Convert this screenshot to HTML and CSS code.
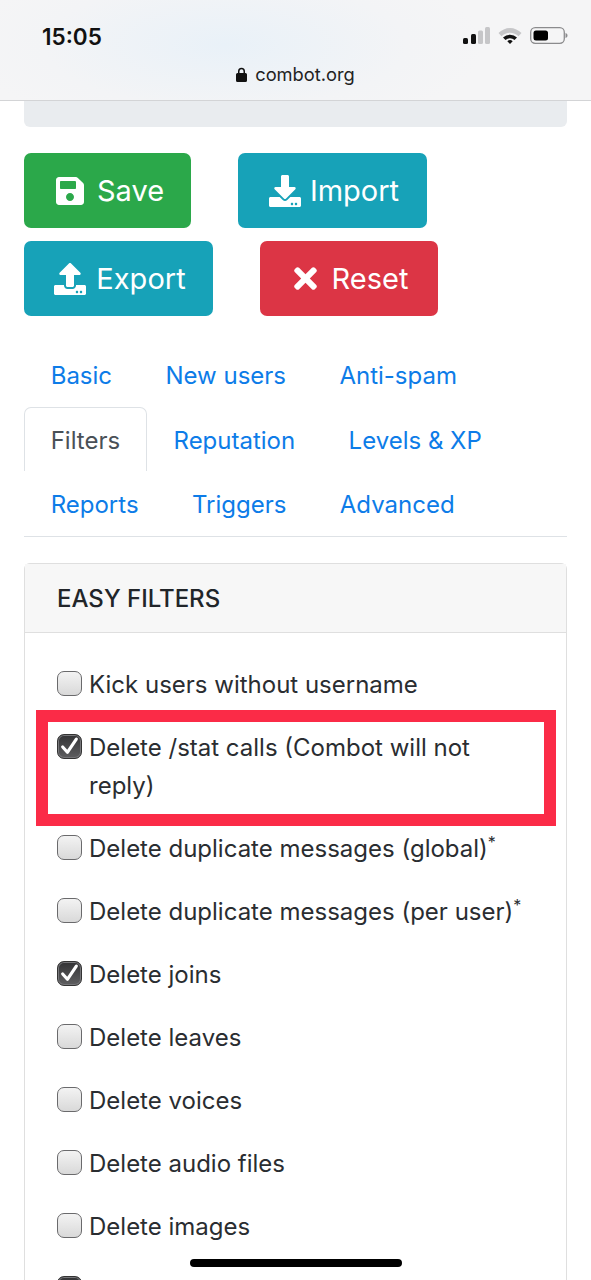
FILE: index.html
```html
<!DOCTYPE html>
<html lang="en">
<head>
<meta charset="utf-8">
<title>combot.org</title>
<link rel="stylesheet" href="styles.css">
</head>
<body>
<div class="screen">
  <header class="browser-bar">
    <div class="status">
      <span class="time">15:05</span>
      <span class="status-icons">
        <svg class="signal" width="27" height="17" viewBox="0 0 27 17"><rect x="0" y="11" width="5" height="6" rx="1.500" fill="#111"/><rect x="8" y="7" width="5" height="10" rx="1.500" fill="#111"/><rect x="15" y="3.500" width="5" height="13.500" rx="1.500" fill="#c6c6c8"/><rect x="22" y="0" width="5" height="17" rx="1.500" fill="#c6c6c8"/></svg>
        <svg class="wifi" width="24" height="17" viewBox="0 0 24 17"><path d="M0.500 6A16 16 0 0 1 23.500 6L20.500 9.200A12 12 0 0 0 3.500 9.200Z" fill="#c6c6c8"/><path d="M5 10.500A10 10 0 0 1 19 10.500L16.500 13A6.500 6.500 0 0 0 7.500 13Z" fill="#111"/><path d="M9.300 14.200A4 4 0 0 1 14.700 14.200L12 17Z" fill="#111"/></svg>
        <svg class="battery" width="38" height="17" viewBox="0 0 38 17"><rect x="0.700" y="0.700" width="33.600" height="15.600" rx="4.500" fill="none" stroke="#8b8b8d" stroke-width="1.300"/><rect x="3.500" y="3.500" width="14.500" height="10" rx="2.500" fill="#000"/><path d="M35.500 6c1.500.4 2 1.400 2 2.500s-.5 2.100-2 2.500z" fill="#8b8b8d"/></svg>
      </span>
    </div>
    <div class="url">
      <svg class="lock" width="11" height="15" viewBox="0 0 11 15"><path d="M2 6V4.300a3.500 3.500 0 0 1 7 0V6h.5A1.500 1.500 0 0 1 11 7.500v6A1.500 1.500 0 0 1 9.500 15h-8A1.500 1.500 0 0 1 0 13.500v-6A1.500 1.500 0 0 1 1.500 6zm1.500 0h4V4.300a2 2 0 0 0-4 0z" fill="#111"/></svg>
      <span>combot.org</span>
    </div>
  </header>

  <main class="page">
    <div class="notice"></div>

    <div class="actions">
      <a class="btn btn-green">
        <svg class="ico ico-save" viewBox="0 0 448 512"><path d="M433.941 129.941l-83.882-83.882A48 48 0 0 0 316.118 32H48C21.49 32 0 53.49 0 80v352c0 26.51 21.49 48 48 48h352c26.51 0 48-21.49 48-48V163.882a48 48 0 0 0-14.059-33.941zM224 416c-35.346 0-64-28.654-64-64 0-35.346 28.654-64 64-64s64 28.654 64 64c0 35.346-28.654 64-64 64zm96-304.52V212c0 6.627-5.373 12-12 12H76c-6.627 0-12-5.373-12-12V108c0-6.627 5.373-12 12-12h228.52c3.183 0 6.235 1.264 8.485 3.515l3.48 3.48A11.996 11.996 0 0 1 320 111.48z"/></svg>
        Save
      </a>
      <a class="btn btn-teal">
        <svg class="ico ico-box" viewBox="0 0 512 512"><path d="M216 0h80c13.3 0 24 10.700 24 24v168h87.700c17.800 0 26.700 21.500 14.100 34.100L269.700 378.300c-7.500 7.500-19.800 7.500-27.300 0L90.100 226.100c-12.600-12.600-3.700-34.100 14.100-34.100H192V24c0-13.300 10.700-24 24-24zm296 376v112c0 13.300-10.700 24-24 24H24c-13.300 0-24-10.700-24-24V376c0-13.300 10.700-24 24-24h146.700l49 49c20.100 20.100 52.500 20.100 72.600 0l49-49H488c13.300 0 24 10.700 24 24zm-124 88c0-11-9-20-20-20s-20 9-20 20 9 20 20 20 20-9 20-20zm64 0c0-11-9-20-20-20s-20 9-20 20 9 20 20 20 20-9 20-20z"/></svg>
        Import
      </a>
      <a class="btn btn-teal">
        <svg class="ico ico-box" viewBox="0 0 512 512"><path d="M296 384h-80c-13.300 0-24-10.700-24-24V192h-87.700c-17.800 0-26.700-21.500-14.100-34.100L242.300 5.700c7.500-7.500 19.800-7.500 27.300 0l152.200 152.200c12.600 12.600 3.700 34.100-14.100 34.100H320v168c0 13.300-10.700 24-24 24zm216-8v112c0 13.300-10.700 24-24 24H24c-13.300 0-24-10.700-24-24V376c0-13.300 10.700-24 24-24h136v8c0 30.900 25.100 56 56 56h80c30.900 0 56-25.100 56-56v-8h136c13.300 0 24 10.700 24 24zm-124 88c0-11-9-20-20-20s-20 9-20 20 9 20 20 20 20-9 20-20zm64 0c0-11-9-20-20-20s-20 9-20 20 9 20 20 20 20-9 20-20z"/></svg>
        Export
      </a>
      <a class="btn btn-red">
        <svg class="ico ico-times" viewBox="0 0 352 512"><path d="M242.720 256l100.070-100.070c12.280-12.280 12.280-32.190 0-44.480l-22.240-22.240c-12.280-12.280-32.190-12.280-44.480 0L176 189.280 75.930 89.210c-12.280-12.280-32.190-12.280-44.480 0L9.210 111.450c-12.280 12.280-12.280 32.190 0 44.480L109.280 256 9.210 356.070c-12.280 12.280-12.280 32.190 0 44.480l22.240 22.240c12.280 12.280 32.200 12.280 44.480 0L176 322.720l100.070 100.070c12.280 12.280 32.200 12.280 44.480 0l22.240-22.240c12.280-12.280 12.280-32.190 0-44.480L242.720 256z"/></svg>
        Reset
      </a>
    </div>

    <nav class="tabs">
      <a class="tab">Basic</a>
      <a class="tab">New users</a>
      <a class="tab">Anti-spam</a>
      <a class="tab tab-active">Filters</a>
      <a class="tab">Reputation</a>
      <a class="tab">Levels &amp; XP</a>
      <a class="tab">Reports</a>
      <a class="tab">Triggers</a>
      <a class="tab">Advanced</a>
    </nav>

    <section class="card">
      <h2 class="card-title">EASY FILTERS</h2>
      <div class="card-body">
        <label class="check"><span class="box"></span><span>Kick users without username</span></label>
        <label class="check"><span class="box box-on"><svg viewBox="0 0 20 20"><path d="M3.500 10.500l4.500 5 8.500-12.500" fill="none" stroke="#fff" stroke-width="3" stroke-linecap="round" stroke-linejoin="round"/></svg></span><span>Delete /stat calls (Combot will not reply)</span></label>
        <label class="check"><span class="box"></span><span>Delete duplicate messages (global)<sup>*</sup></span></label>
        <label class="check"><span class="box"></span><span>Delete duplicate messages (per user)<sup>*</sup></span></label>
        <label class="check"><span class="box box-on"><svg viewBox="0 0 20 20"><path d="M3.500 10.500l4.500 5 8.500-12.500" fill="none" stroke="#fff" stroke-width="3" stroke-linecap="round" stroke-linejoin="round"/></svg></span><span>Delete joins</span></label>
        <label class="check"><span class="box"></span><span>Delete leaves</span></label>
        <label class="check"><span class="box"></span><span>Delete voices</span></label>
        <label class="check"><span class="box"></span><span>Delete audio files</span></label>
        <label class="check"><span class="box"></span><span>Delete images</span></label>
        <label class="check"><span class="box box-on"></span><span>Delete sticker messages</span></label>
      </div>
    </section>
  </main>

  <div class="highlight"></div>
  <div class="home-indicator"></div>
</div>
</body>
</html>
```
FILE: styles.css
```css
* { box-sizing: border-box; }
html, body { margin: 0; padding: 0; background: #fff; }
.screen {
  position: relative;
  width: 591px;
  height: 1280px;
  overflow: hidden;
  font-family: Inter, "Liberation Sans", sans-serif;
  color: #212529;
}
.browser-bar {
  height: 101px;
  background: radial-gradient(ellipse 260px 90px at 225px 45px, #e9f1f8 0%, #f3f4f6 70%, #f5f5f6 100%);
  border-bottom: 1px solid #d3d4d6;
}
.status {
  display: flex;
  justify-content: space-between;
  align-items: center;
  height: 37px;
  padding: 18px 23px 0 42px;
  box-sizing: content-box;
}
.time { font-size: 22.500px; font-weight: 600; color: #111; }
.status-icons { display: flex; align-items: center; gap: 8px; margin-top: -2px; }
.url {
  display: flex;
  justify-content: center;
  align-items: center;
  gap: 8px;
  height: 30px;
  margin-top: 4px;
  font-size: 18.300px;
  color: #222;
}
.page { padding: 0 24px; }
.notice {
  height: 26px;
  background: #e9ecef;
  border-radius: 0 0 6px 6px;
}
.actions {
  display: flex;
  flex-wrap: wrap;
  column-gap: 47px;
  row-gap: 13px;
  margin-top: 26px;
}
.btn {
  display: flex;
  align-items: center;
  justify-content: center;
  height: 75px;
  border-radius: 7px;
  font-size: 29px;
  color: #fff;
}
.btn:nth-child(1) { width: 167px; gap: 13px; padding-left: 5px; }
.btn:nth-child(2) { width: 189px; gap: 9px; padding-left: 3px; }
.btn:nth-child(3) { width: 189px; gap: 10px; padding-left: 3px; }
.btn:nth-child(4) { width: 178px; gap: 15px; padding-left: 4px; }
.btn-green { background: #2ba84a; }
.btn-teal { background: #17a2b8; }
.btn-red { background: #dc3545; }
.ico { fill: #fff; flex: none; }
.ico-save { width: 28px; height: 32px; }
.ico-box { width: 32px; height: 32px; }
.ico-times { width: 23px; height: 33px; }
.tabs {
  display: flex;
  flex-wrap: wrap;
  margin-top: 26px;
  border-bottom: 1px solid #dee2e6;
}
.tab {
  height: 64.600px;
  padding: 2px 25.700px 0;
  display: flex;
  align-items: center;
  font-size: 24px;
  color: #0d7ce8;
  border: 1px solid transparent;
  border-bottom: 0;
}
.tab-active {
  color: #495057;
  border-color: #dee2e6;
  border-radius: 7px 7px 0 0;
  background: #fff;
}
.card {
  margin-top: 26px;
  border: 1px solid #dfdfdf;
  border-radius: 6px 6px 0 0;
  height: 800px;
}
.card-title {
  margin: 0;
  height: 69px;
  display: flex;
  align-items: center;
  padding: 2px 32px 0;
  font-size: 24px;
  font-weight: 500;
  background: #f7f7f7;
  border-bottom: 1px solid #dfdfdf;
}
.card-body {
  display: flex;
  flex-direction: column;
  gap: 25px;
  padding: 33px 32px 0;
}
.check {
  display: flex;
  gap: 7px;
  font-size: 24px;
  line-height: 38px;
  color: #2a2d31;
}
.check sup { font-size: 16px; line-height: 0; }
.box {
  flex: none;
  width: 25px;
  height: 25px;
  margin-top: 5px;
  border: 1.500px solid #6a6a6c;
  border-radius: 7px;
  background: linear-gradient(#f3f3f3, #d9d9d9);
}
.box-on {
  background: linear-gradient(#333335, #5e5e60);
  border-color: #333;
  box-shadow: inset 0 0 0 1px #77777a;
  display: flex;
  align-items: center;
  justify-content: center;
}
.box-on svg { width: 21px; height: 21px; }
.highlight {
  position: absolute;
  left: 36px;
  top: 710px;
  width: 520px;
  height: 116px;
  border: 12.500px solid #fb2b47;
}
.home-indicator {
  position: absolute;
  left: 190px;
  top: 1259px;
  width: 212px;
  height: 8px;
  border-radius: 4px;
  background: #000;
}
```
